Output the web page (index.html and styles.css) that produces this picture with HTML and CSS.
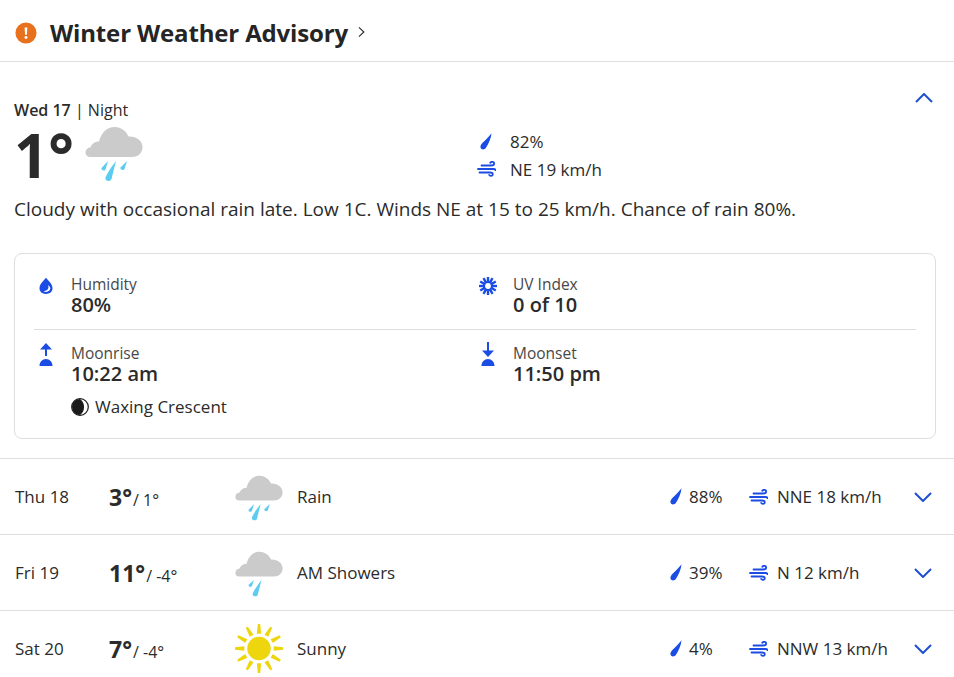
FILE: index.html
```html
<!DOCTYPE html>
<html lang="en">

<head>
    <meta charset="UTF-8">
    <title>Weather</title>
    <link rel="stylesheet" href="styles.css">
</head>

<body>
    <svg class="icon-defs" aria-hidden="true">
        <symbol id="cloud" viewBox="0 0 58 57">
            <path fill="#cbcbcb" d="M5 31a4.500 4.500 0 0 1-4.500-4.500c0-3 2-4.800 5-5.200C7 17.500 10 15.500 14 15.500 16 7 22 1 29.500 1 36.500 1 41.500 5.500 43.500 10.500 51 10 57.500 14.500 57.500 21c0 6-4.500 10-10.500 10z"/>
        </symbol>
        <symbol id="rain" viewBox="0 0 58 57">
            <use href="#cloud"/>
            <path fill="#5ccdf0" d="M23 35l-2.500 8.500c-.8 1.800-4.800 1-4-1.500z"/>
            <path fill="#5ccdf0" d="M31 35l-4.500 18c-1 3-7 2.500-6-1.500 1-3 6-11 10.500-16.500z"/>
            <path fill="#5ccdf0" d="M42 35l-2.500 8c-.8 1.800-5 1-4-1.500z"/>
        </symbol>
        <symbol id="showers" viewBox="0 0 58 57">
            <use href="#cloud"/>
            <path fill="#5ccdf0" d="M23 35l-2.500 7.500c-.8 1.800-4.800 1-4-1.500z"/>
            <path fill="#5ccdf0" d="M32 35l-4.500 18c-1 3-7 2.500-6-1.500 1-3 6-11 10.500-16.500z"/>
        </symbol>
        <symbol id="sun" viewBox="0 0 48 50">
            <circle cx="24" cy="25" r="12" fill="#edd60e"/>
            <g fill="#edd60e">
                <path id="sun-ray" d="M22.800 0h2.400l1 10h-4.400z"/>
                <use href="#sun-ray" transform="rotate(30 24 25)"/>
                <use href="#sun-ray" transform="rotate(60 24 25)"/>
                <use href="#sun-ray" transform="rotate(90 24 25)"/>
                <use href="#sun-ray" transform="rotate(120 24 25)"/>
                <use href="#sun-ray" transform="rotate(150 24 25)"/>
                <use href="#sun-ray" transform="rotate(180 24 25)"/>
                <use href="#sun-ray" transform="rotate(210 24 25)"/>
                <use href="#sun-ray" transform="rotate(240 24 25)"/>
                <use href="#sun-ray" transform="rotate(270 24 25)"/>
                <use href="#sun-ray" transform="rotate(300 24 25)"/>
                <use href="#sun-ray" transform="rotate(330 24 25)"/>
            </g>
        </symbol>
        <symbol id="precip" viewBox="0 0 12 17">
            <path fill="#1b4de4" d="M11.500 .3C11 5.500 8.500 11 6 14.800 4.500 17.300 .4 17 .4 13.800 .4 10.500 7.500 6 11.500 .3z"/>
        </symbol>
        <symbol id="wind" viewBox="0 0 19 16">
            <path fill="none" stroke="#1b4de4" stroke-width="1.800" stroke-linecap="round" d="M4.500 4.500h9.500c2 0 3.200-.7 3.200-2 0-1.900-3-2.300-3.900-.7M1 8h15.500c1.300 0 2 .4 2 1.200M2.500 11.500h10.500c1.800 0 2.800 .6 2.800 1.700 0 1.800-2.800 2.200-3.700 .7"/>
        </symbol>
    </svg>

    <div class="page">
        <!-- Alert bar -->
        <div class="alert">
            <svg class="alert-icon" viewBox="0 0 24 24">
                <circle cx="12" cy="12" r="11.500" fill="#e8711d"/>
                <path fill="#fff" d="M10.500 6h3l-.5 8h-2z"/>
                <circle cx="12" cy="17" r="1.600" fill="#fff"/>
            </svg>
            <span class="alert-title">Winter Weather Advisory</span>
            <svg class="alert-arrow" viewBox="0 0 8 14">
                <path fill="none" stroke="#2b2b2b" stroke-width="1.300" d="M1 1.500L6.800 7 1 12.500"/>
            </svg>
        </div>

        <!-- Tonight -->
        <div class="today">
            <div class="today-head">
                <div class="today-main">
                    <div class="today-date"><span class="today-day">Wed 17</span> | Night</div>
                    <div class="today-temp">
                        <span class="today-num">1°</span>
                        <svg class="today-icon"><use href="#rain"/></svg>
                    </div>
                </div>
                <div class="today-stats">
                    <div class="stat"><svg class="stat-precip"><use href="#precip"/></svg>82%</div>
                    <div class="stat"><svg class="stat-wind"><use href="#wind"/></svg>NE 19 km/h</div>
                </div>
                <svg class="chevron chevron-up" viewBox="0 0 18 10">
                    <path d="M1 9l8-8 8 8"/>
                </svg>
            </div>
            <p class="today-text">Cloudy with occasional rain late. Low 1C. Winds NE at 15 to 25 km/h. Chance of rain 80%.</p>

            <div class="card">
                <div class="card-row card-row-top">
                    <div class="detail">
                        <svg class="detail-icon" viewBox="0 0 18 18">
                            <path fill="#1b4de4" d="M9 .5c1.800 3.200 6.500 6 6.500 10.800C15.500 14.800 12.800 17 9 17s-6.500-2.200-6.500-5.700C2.500 6.500 7.200 3.700 9 .5z"/>
                            <path fill="#fff" d="M11 8c1.500 3 -.5 6-4.500 6.300C9.500 15.800 13.300 14.300 13.300 11.300 13.300 9.800 12.300 8.800 11 8z"/>
                        </svg>
                        <div>
                            <div class="detail-label">Humidity</div>
                            <div class="detail-value">80%</div>
                        </div>
                    </div>
                    <div class="detail">
                        <svg class="detail-icon" viewBox="0 0 18 18">
                            <g fill="#1b4de4">
                                <path id="uv-ray" d="M7.800 0h2.400v5H7.800z"/>
                                <use href="#uv-ray" transform="rotate(30 9 9)"/>
                                <use href="#uv-ray" transform="rotate(60 9 9)"/>
                                <use href="#uv-ray" transform="rotate(90 9 9)"/>
                                <use href="#uv-ray" transform="rotate(120 9 9)"/>
                                <use href="#uv-ray" transform="rotate(150 9 9)"/>
                                <use href="#uv-ray" transform="rotate(180 9 9)"/>
                                <use href="#uv-ray" transform="rotate(210 9 9)"/>
                                <use href="#uv-ray" transform="rotate(240 9 9)"/>
                                <use href="#uv-ray" transform="rotate(270 9 9)"/>
                                <use href="#uv-ray" transform="rotate(300 9 9)"/>
                                <use href="#uv-ray" transform="rotate(330 9 9)"/>
                            </g>
                            <circle cx="9" cy="9" r="4" fill="#fff" stroke="#1b4de4" stroke-width="2.200"/>
                        </svg>
                        <div>
                            <div class="detail-label">UV Index</div>
                            <div class="detail-value">0 of 10</div>
                        </div>
                    </div>
                </div>
                <div class="card-row">
                    <div class="detail">
                        <svg class="detail-icon" viewBox="0 0 18 24">
                            <path fill="#1b4de4" d="M2.500 24c0-4 2.800-7 6.500-7s6.500 3 6.500 7zM9 1l6 6.500h-5V14H8V7.500H3z"/>
                        </svg>
                        <div>
                            <div class="detail-label">Moonrise</div>
                            <div class="detail-value">10:22 am</div>
                            <div class="moon-phase">
                                <svg class="moon-icon" viewBox="0 0 18 18">
                                    <circle cx="9" cy="9" r="8.300" fill="#fff" stroke="#1a1a1a" stroke-width="1.200"/>
                                    <path fill="#1a1a1a" d="M9 1a8 8 0 0 0 0 16c3-2 4-5 4-8s-1-6-4-8z"/>
                                </svg>
                                Waxing Crescent
                            </div>
                        </div>
                    </div>
                    <div class="detail">
                        <svg class="detail-icon" viewBox="0 0 18 24">
                            <path fill="#1b4de4" d="M2.500 24c0-4 2.800-7 6.500-7s6.500 3 6.500 7zM8 0h2v8.500h5L9 15 3 8.500h5z"/>
                        </svg>
                        <div>
                            <div class="detail-label">Moonset</div>
                            <div class="detail-value">11:50 pm</div>
                        </div>
                    </div>
                </div>
            </div>
        </div>

        <!-- Next days -->
        <div class="day-row">
            <div class="day-name">Thu 18</div>
            <div class="day-temp"><b>3°</b><span class="day-low">/ 1°</span></div>
            <svg class="day-icon day-icon-cloud"><use href="#rain"/></svg>
            <div class="day-desc">Rain</div>
            <div class="day-precip"><svg class="day-drop"><use href="#precip"/></svg>88%</div>
            <div class="day-wind"><svg class="day-gust"><use href="#wind"/></svg>NNE 18 km/h</div>
            <svg class="chevron" viewBox="0 0 18 10"><path d="M1 1l8 8 8-8"/></svg>
        </div>
        <div class="day-row">
            <div class="day-name">Fri 19</div>
            <div class="day-temp"><b>11°</b><span class="day-low">/ -4°</span></div>
            <svg class="day-icon day-icon-cloud"><use href="#showers"/></svg>
            <div class="day-desc">AM Showers</div>
            <div class="day-precip"><svg class="day-drop"><use href="#precip"/></svg>39%</div>
            <div class="day-wind"><svg class="day-gust"><use href="#wind"/></svg>N 12 km/h</div>
            <svg class="chevron" viewBox="0 0 18 10"><path d="M1 1l8 8 8-8"/></svg>
        </div>
        <div class="day-row">
            <div class="day-name">Sat 20</div>
            <div class="day-temp"><b>7°</b><span class="day-low">/ -4°</span></div>
            <svg class="day-icon"><use href="#sun"/></svg>
            <div class="day-desc">Sunny</div>
            <div class="day-precip"><svg class="day-drop"><use href="#precip"/></svg>4%</div>
            <div class="day-wind"><svg class="day-gust"><use href="#wind"/></svg>NNW 13 km/h</div>
            <svg class="chevron" viewBox="0 0 18 10"><path d="M1 1l8 8 8-8"/></svg>
        </div>
    </div>
</body>

</html>
```

FILE: styles.css
```css
html,
body {
    margin: 0;
    height: 100%;
    overflow: hidden;
}

body {
    font-family: 'Open Sans', 'Noto Sans', sans-serif;
    font-size: 17px;
    color: #2b2b2b;
    background-color: #fff;
}

.icon-defs {
    display: none;
}

.page {
    width: 954px;
}

/* Alert bar */
.alert {
    display: flex;
    align-items: center;
    height: 61px;
    padding-left: 15px;
    border-bottom: 1px solid #dedede;
}

.alert-icon {
    width: 22px;
    height: 22px;
    margin: 4px 13px 0 0;
}

.alert-title {
    margin-top: 3px;
    font-size: 24px;
    font-weight: 700;
    color: #252525;
    letter-spacing: -0.15px;
}

.alert-arrow {
    width: 7px;
    height: 12px;
    margin: 2px 0 0 10px;
}

/* Tonight */
.today {
    padding: 37px 18px 19px 14px;
    border-bottom: 1px solid #dedede;
}

.today-head {
    display: flex;
    align-items: flex-start;
}

.today-main {
    width: 463px;
}

.today-date {
    font-size: 16px;
    line-height: 22px;
}

.today-day {
    font-weight: 600;
}

.today-temp {
    display: flex;
    align-items: flex-start;
    height: 63px;
}

.today-num {
    width: 71px;
    margin-top: 3px;
    font-size: 60px;
    font-weight: 700;
    line-height: 62px;
}

.today-icon {
    width: 58px;
    height: 57px;
    margin-top: 5px;
}

.today-stats {
    flex: 1;
    padding-top: 28px;
}

.stat {
    display: flex;
    align-items: center;
    height: 28px;
}

.stat-precip {
    width: 12px;
    height: 17px;
    margin: 0 18px 0 3px;
}

.stat-wind {
    width: 19px;
    height: 16px;
    margin-right: 14px;
}

.chevron {
    width: 18px;
    height: 10px;
    flex-shrink: 0;
}

.chevron path {
    fill: none;
    stroke: #1f4fd0;
    stroke-width: 2;
}

.chevron-up {
    margin: -6px 3px 0 0;
}

.today-text {
    margin: 13px 0 32px;
    font-size: 19px;
    line-height: 24px;
}

/* Details card */
.card {
    height: 184px;
    padding: 0 19px;
    border: 1px solid #dedede;
    border-radius: 8px;
}

.card-row {
    display: grid;
    grid-template-columns: 442px 1fr;
    padding-top: 12px;
}

.card-row-top {
    height: 56px;
    padding-top: 19px;
    border-bottom: 1px solid #dedede;
}

.detail {
    display: flex;
    align-items: flex-start;
}

.detail-icon {
    width: 18px;
    height: 18px;
    margin: 4px 16px 0 3px;
    flex-shrink: 0;
}

.card-row:not(.card-row-top) .detail-icon {
    height: 24px;
    margin-top: 0;
}

.detail-label {
    margin-bottom: -2px;
    font-size: 15.500px;
    line-height: 22px;
    color: #484848;
}

.detail-value {
    font-size: 20px;
    font-weight: 600;
    line-height: 24px;
}

.moon-phase {
    display: flex;
    align-items: center;
    margin-top: 10px;
    font-weight: 500;
    line-height: 22px;
}

.moon-icon {
    width: 18px;
    height: 18px;
    margin-right: 6px;
}

/* Next days */
.day-row {
    display: flex;
    align-items: center;
    height: 75px;
    padding: 0 22px 0 15px;
    border-bottom: 1px solid #dedede;
}

.day-name {
    width: 94px;
}

.day-temp {
    display: flex;
    align-items: baseline;
    width: 126px;
}

.day-temp b {
    margin-right: 1px;
    font-size: 23px;
    font-weight: 700;
}

.day-low {
    font-size: 16px;
}

.day-icon {
    width: 48px;
    height: 49px;
    margin-right: 14px;
}

.day-icon-cloud {
    margin-top: 3px;
}

.day-desc {
    flex: 1;
}

.day-precip {
    display: flex;
    align-items: center;
    width: 79px;
    margin-left: 1px;
}

.day-wind {
    display: flex;
    align-items: center;
    width: 165px;
}

.day-drop {
    width: 12px;
    height: 17px;
    margin-right: 7px;
}

.day-gust {
    width: 19px;
    height: 16px;
    margin-right: 9px;
}
```
